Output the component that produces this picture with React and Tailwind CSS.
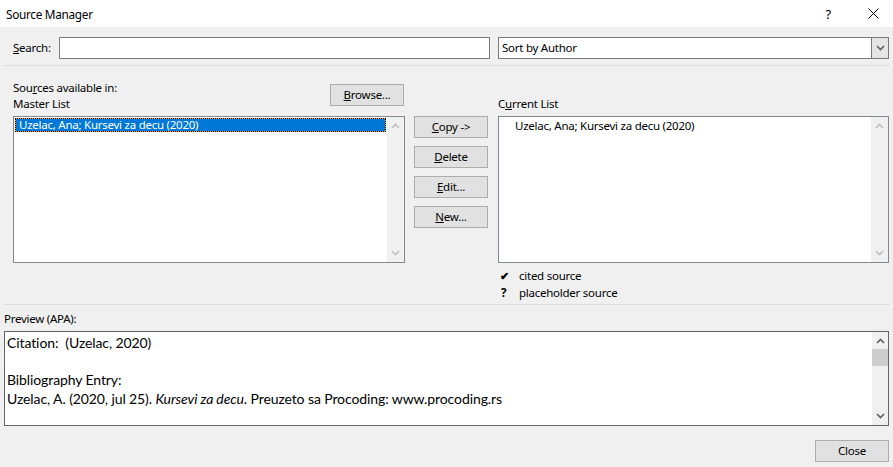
import React from "react";

const ui = { fontFamily: '"Noto Sans", "Segoe UI", sans-serif' };
const prev = { fontFamily: 'Lato, "Noto Sans", sans-serif' };

function Chevron({ dir = "up", color = "#c0c0c0" }) {
  return (
    <svg width="9" height="6" viewBox="0 0 9 6">
      {dir === "up" ? (
        <path d="M1 5 L4.5 1.5 L8 5" fill="none" stroke={color} strokeWidth="1.6" />
      ) : (
        <path d="M1 1 L4.5 4.5 L8 1" fill="none" stroke={color} strokeWidth="1.6" />
      )}
    </svg>
  );
}

function ListScroll() {
  return (
    <div className="w-[17px] bg-[#f0f0f0] flex flex-col items-center justify-between py-[6px]">
      <Chevron dir="up" />
      <Chevron dir="down" />
    </div>
  );
}

function Btn({ children, className = "" }) {
  return (
    <div
      className={
        "h-[22px] border border-[#adadad] bg-[#e1e1e1] flex items-center justify-center text-black " +
        className
      }
    >
      {children}
    </div>
  );
}

export default function App() {
  return (
    <div style={ui} className="w-[893px] h-[467px] bg-[#f0f0f0] flex flex-col text-[11.5px] tracking-[-0.25px] text-black leading-[16px] overflow-hidden">
      {/* title bar */}
      <div className="h-[27px] bg-white flex items-center shrink-0">
        <span className="ml-[6px] text-[11.8px] tracking-[-0.3px]">Source Manager</span>
        <div className="ml-auto flex items-center">
          <span className="text-[13px] mr-[37px]">?</span>
          <svg width="11" height="11" viewBox="0 0 11 11" className="mr-[14px]">
            <path d="M0.5 0.5 L10.5 10.5 M10.5 0.5 L0.5 10.5" stroke="#000" strokeWidth="1" />
          </svg>
        </div>
      </div>

      {/* search row */}
      <div className="mt-[10px] h-[22px] flex items-center shrink-0">
        <span className="ml-[13px] w-[46px]">
          <u>S</u>earch:
        </span>
        <div className="w-[431px] h-[22px] bg-white border border-[#7a7a7a]" />
        <div className="ml-[8px] w-[391px] h-[22px] bg-white border border-[#7a7a7a] flex items-center">
          <span className="ml-[3px]">Sort by Author</span>
          <div className="ml-auto h-full w-[17px] bg-[#e5e5e5] border-l border-[#7a7a7a] flex items-center justify-center">
            <Chevron dir="down" color="#606060" />
          </div>
        </div>
      </div>

      <div className="mt-[6px] mx-[4px] h-px bg-[#dcdcdc] shrink-0" />

      {/* main area */}
      <div className="mt-[13px] flex shrink-0">
        {/* left column */}
        <div className="ml-[13px] w-[392px] flex flex-col">
          <div className="h-[37px] flex">
            <div className="flex flex-col pt-px">
              <span>
                Sou<u>r</u>ces available in:
              </span>
              <span>Master List</span>
            </div>
            <Btn className="ml-auto mr-px mt-[5px] w-[74px]">
              <span>
                <u>B</u>rowse...
              </span>
            </Btn>
          </div>
          <div className="h-[147px] bg-white border border-[#828790] flex">
            <div className="flex-1 p-px">
              <div className="border border-dotted border-black bg-[#f29f36]">
                <div className="bg-[#0078d7] text-white h-[12px] leading-[12px] pl-[3px]">
                  Uzelac, Ana; Kursevi za decu (2020)
                </div>
              </div>
            </div>
            <ListScroll />
          </div>
        </div>

        {/* middle buttons */}
        <div className="ml-[9px] w-[74px] pt-[37px] flex flex-col gap-[8px]">
          <Btn>
            <span>
              <u>C</u>opy -&gt;
            </span>
          </Btn>
          <Btn>
            <span>
              <u>D</u>elete
            </span>
          </Btn>
          <Btn>
            <span>
              <u>E</u>dit...
            </span>
          </Btn>
          <Btn>
            <span>
              <u>N</u>ew...
            </span>
          </Btn>
        </div>

        {/* right column */}
        <div className="ml-[10px] w-[391px] flex flex-col">
          <div className="h-[37px] flex items-end pb-[4px]">
            <span>
              C<u>u</u>rrent List
            </span>
          </div>
          <div className="h-[147px] bg-white border border-[#828790] flex">
            <div className="flex-1 pl-[16px] pt-px">Uzelac, Ana; Kursevi za decu (2020)</div>
            <ListScroll />
          </div>
          <div className="mt-[4px] leading-[17px]">
            <div className="flex">
              <span className="w-[21px] pl-[2px] text-[11px] font-bold">✔</span>
              <span>cited source</span>
            </div>
            <div className="flex">
              <span className="w-[21px] pl-[3px] font-bold">?</span>
              <span>placeholder source</span>
            </div>
          </div>
        </div>
      </div>

      <div className="mt-[3px] mx-[4px] h-px bg-[#dcdcdc] shrink-0" />

      <div className="mt-[6px] ml-[4px] shrink-0">Preview (APA):</div>

      <div className="mt-[4px] ml-[4px] w-[885px] h-[95px] bg-white border border-[#646464] flex shrink-0">
        <div style={prev} className="flex-1 pl-[2px] pt-[2px] text-[14px] tracking-[-0.1px] leading-[18.5px]">
          <div>Citation:&nbsp; (Uzelac, 2020)</div>
          <div>&nbsp;</div>
          <div>Bibliography Entry:</div>
          <div>
            Uzelac, A. (2020, jul 25). <i>Kursevi za decu</i>. Preuzeto sa Procoding: www.procoding.rs
          </div>
        </div>
        <div className="w-[16px] bg-[#f0f0f0] flex flex-col items-center">
          <div className="mt-[6px]">
            <Chevron dir="up" color="#606060" />
          </div>
          <div className="mt-[5px] w-full h-[17px] bg-[#cdcdcd]" />
          <div className="mt-auto mb-[6px]">
            <Chevron dir="down" color="#606060" />
          </div>
        </div>
      </div>

      <div className="mt-[14px] flex justify-end shrink-0">
        <Btn className="w-[74px] mr-[4px]">Close</Btn>
      </div>
    </div>
  );
}
